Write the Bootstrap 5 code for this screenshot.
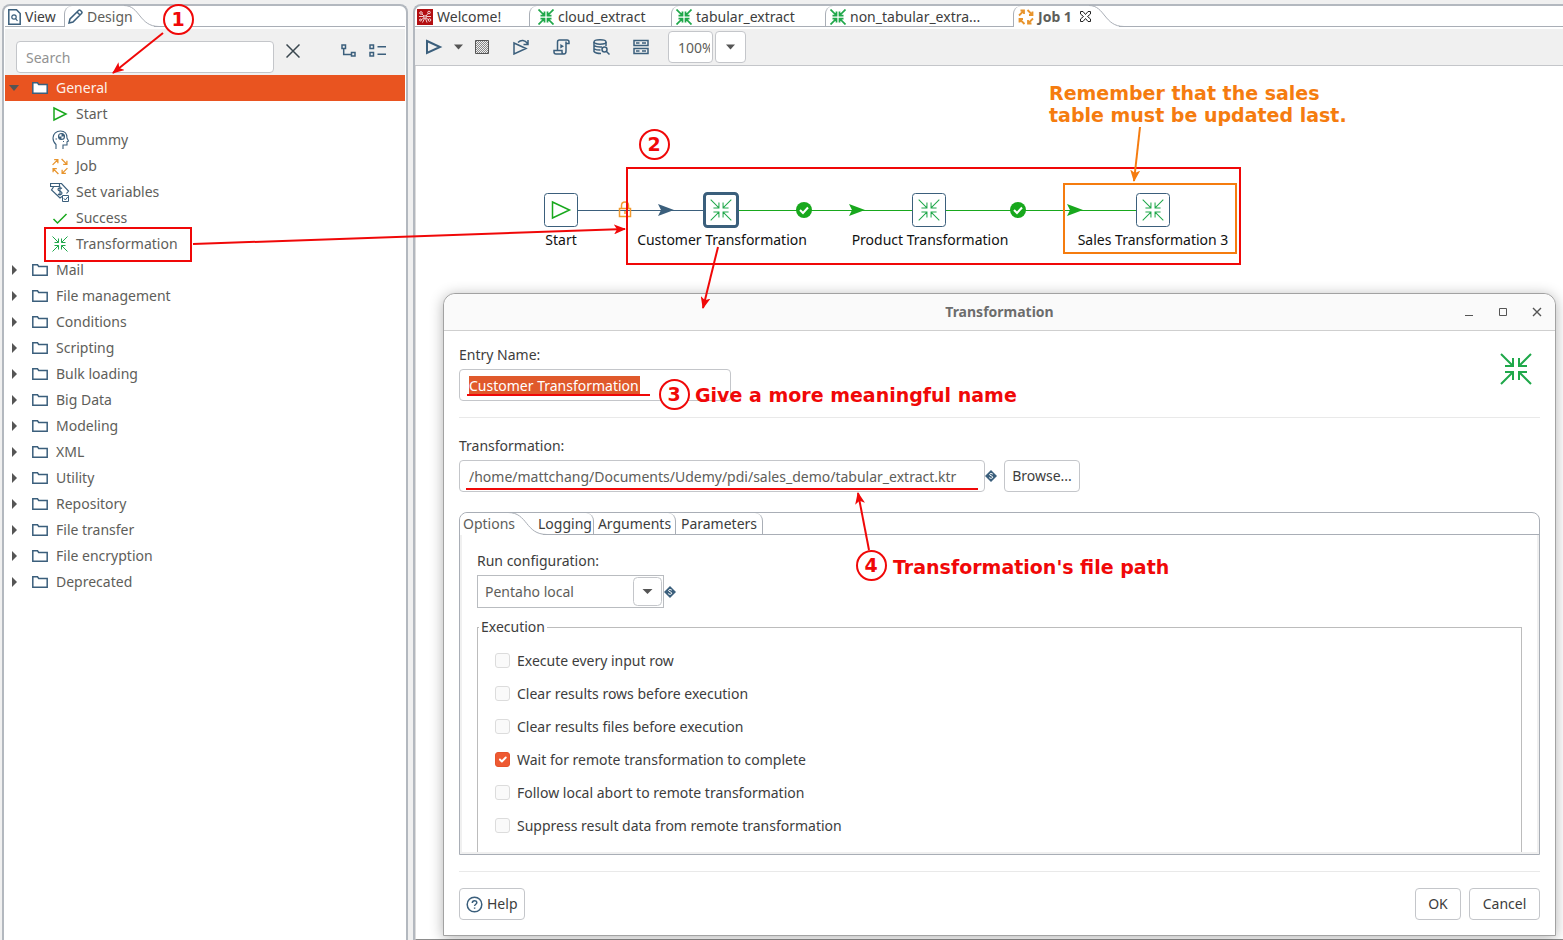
<!DOCTYPE html>
<html lang="en">
<head>
<meta charset="utf-8">
<meta name="viewport" content="width=device-width, initial-scale=1">
<title>Job 1</title>
<link href="https://cdn.jsdelivr.net/npm/bootstrap@5.3.0/dist/css/bootstrap.min.css" rel="stylesheet">
<style>
  :root { --steel:#3b5f7c; --line:#a9aeb6; --soft:#c4c6ca; --orange:#e95420; --green:#1fa84a; --ink:#3d3d3d; --muted-ink:#5e5e5a; }
  body { font-family:"Noto Sans","Open Sans",sans-serif; font-size:14px; line-height:20px; color:var(--ink); background:#f0f0f0; height:100vh; min-height:900px; }
  svg { display:block; flex:none; }
  button { color:inherit; }
  .ico { fill:none; stroke:var(--steel); stroke-width:1.5; }
  .ico-green { stroke:var(--green); }
  .ico-amber { stroke:#e8942c; }
  .arrow-fill { fill:#555; }
  .workbench { padding-top:4px; padding-left:2px; gap:5px; }
  .pane { background:#fff; border:2px solid #b3b8bf; border-bottom:0; border-radius:8px 8px 0 0; }
  .pane-side { width:406px; flex:none; padding:0 1px; }
  .pane-main { border-right:0; border-top-right-radius:0; min-width:0; min-height:0; }

  .tab-strip { height:21px; border-bottom:1px solid var(--line); margin-bottom:2px; flex:none; }
  .tab-strip > button { border:0; background:none; padding:0; height:21px; gap:4px; position:relative; white-space:nowrap; }
  .tab-strip > .edge { border-left:1px solid var(--line); border-top-left-radius:8px; padding-left:4px; }
  .tab-strip > .on { background:#fff; color:var(--muted-ink); }
  .tab-tail { position:absolute; left:100%; top:-2px; margin-left:-8px; fill:none; stroke:var(--line); }
  .tab-tail .cover { fill:#fff; stroke:none; }
  .tab-strip > .t-view { width:59px; padding-left:3px; }
  .tab-strip > .t-design { width:68px; padding-left:3px; }
  .tab-strip > .t-home { width:114px; padding-left:2px; }
  .t-cloud { width:142px; } .t-tab { width:154px; } .t-non { width:188px; } .t-job { width:84px; }

  .side-tools { background:#f0f0f0; height:46px; padding-left:11px; flex:none; }
  .side-tools .icon-btn { margin-top:15px; }
  .field { border:1px solid var(--soft); border-radius:4px; background:#fff; color:var(--muted-ink); height:32px; padding:0 9px; outline:0; }
  .field-search { width:258px; margin-top:12px; }
  .field-search::placeholder { color:#929292; }
  .icon-btn { border:0; background:none; padding:0; }
  .tree button { width:100%; height:26px; border:0; background:none; padding:0 0 0 7px; color:var(--muted-ink); display:flex; align-items:center; text-align:left; }
  .tree .folder { margin:0 8px 0 14px; }
  .tree .twisty { width:6px; fill:#555; }
  .tree .open-row { background:var(--orange); color:#fdf0e8; padding-left:4px; }
  .tree .open-row .twisty { width:10px; }
  .tree .open-row .folder { fill:#fff; margin-left:13px; }
  .tree .kid { padding-left:45px; gap:6px; }

  .tool-bar { background:#f0f0f0; height:37px; border-bottom:1px solid var(--soft); padding-left:10px; flex:none; }
  .tool-bar .icon-btn { margin-right:19px; }
  .tool-bar .icon-tight { margin-right:7px; }
  .field-zoom { width:45px; padding-right:2px; }
  .field-box { width:31px; margin-left:2px; padding:0; display:flex; align-items:center; justify-content:center; }
  .canvas { border-left:1px solid #dcdcdc; border-bottom:1px solid #8c8c8c; background:#fff; padding-bottom:3px; min-height:0; }

  .job-dialog { margin:0 7px 0 27px; border:1px solid #a2a2a2; border-radius:12px 12px 0 0; background:#fff; box-shadow:0 2px 14px rgba(0,0,0,.3); min-height:0; position:relative; }
  .dialog-head { height:37px; background:#fafafa; border-bottom:1px solid #cfcfcf; border-radius:12px 12px 0 0; }
  .dialog-head .caps { right:12px; gap:22px; }
  .dialog-body { padding:14px 15px 15px; min-height:0; }
  .rule { height:1px; background:#e9e9e9; flex:none; }
  .path-label { padding-top:18px; }
  .field-name { width:272px; color:#fff; background:linear-gradient(#e0592b,#e0592b) 9px 6px / 171px 18px no-repeat #fff; }
  .field-path { width:526px; }
  .push { background:#fff; border:1px solid var(--soft); border-radius:4px; height:32px; padding:0 6px; color:var(--ink); white-space:nowrap; }
  .push-ok { width:46px; } .push-cancel { width:71px; } .push-browse { width:76px; margin-left:7px; } .push-help { width:66px; }

  .notebook { border:1px solid var(--line); border-radius:8px 8px 0 0; margin-top:20px; min-height:0; }
  .notebook .tab-strip { margin:0; height:22px; }
  .notebook .tab-strip > button { padding:0 3px; border-right:1px solid var(--line); border-top-right-radius:8px; }
  .notebook .tab-strip > .on { border:0; width:72px; height:22px; text-align:left; border-radius:8px 0 0 0; }
  .notebook .tab-strip > .after { padding-left:6px; width:62px; text-align:right; }
  .t-arg { width:82px; } .t-par { width:87px; }
  .notebook .tab-tail { top:-1px; margin-left:-24px; }
  .sheet { padding:16px 15px 0; border:solid #f0f0f0; border-width:0 2px 2px; min-height:0; overflow:hidden; }
  .combo { width:187px; height:33px; appearance:none; border:1px solid #b9bcc0; border-radius:0; color:var(--muted-ink); padding:0 7px;
    background:#fff url("data:image/svg+xml,%3Csvg xmlns='http://www.w3.org/2000/svg' width='29' height='29'%3E%3Crect x='.5' y='.5' width='28' height='28' rx='4' fill='%23fff' stroke='%23c4c6ca'/%3E%3Cpath d='M9.500 12h10l-5 5z' fill='%23555'/%3E%3C/svg%3E") right 1px top 1px no-repeat; }
  .exec { border:1px solid #bcbcbc; padding:7px 0 0; height:260px; margin-top:9px; }
  .exec legend { float:none; width:auto; font-size:14px; line-height:20px; padding:0 2px; margin:0 0 0 1px; }
  .opt { height:33px; gap:7px; padding-left:17px; }
  .opt .form-check-input { width:15px; height:15px; margin:0; border:1px solid #dcdcdc; background-color:#fafafa; border-radius:3px; }
  .opt .form-check-input:checked { background-color:#ee5a32; border-color:#e5532c; }

  .notes { position:absolute; left:0; top:0; pointer-events:none; z-index:5; font-family:"DejaVu Sans",sans-serif; font-weight:700; font-size:19px; }
  .hops text { font-size:14px; text-anchor:middle; fill:#111; }
</style>
</head>
<body class="position-relative overflow-hidden">

<svg width="0" height="0" class="position-absolute" aria-hidden="true">
  <symbol id="i-trans" viewBox="-1 -1 32 32"><path d="M0 0l12 12M4 12h8V4M30 0L18 12M26 12h-8V4M0 30l12-12M4 18h8v8M30 30L18 18M26 18h-8v8"/></symbol>
  <symbol id="i-job" viewBox="0 0 16 16"><path d="M1 6.500L6 1.500M2.500 1.500H6V5M9.500 1l5 5M14.500 2.500V6H11M6.500 15l-5-5M1.500 13.500V10H5M15 9.500l-5 5M10 11v3.500h3.500"/></symbol>
  <symbol id="i-folder" viewBox="0 0 16 12"><path d="M.8 11.200V.8h4.700l1.200 1.700h8.500v8.700z"/></symbol>
  <symbol id="i-var" viewBox="0 0 12 12"><path d="M6 0l6 6-6 6-6-6z" fill="#3b5f7c" stroke="none"/><path d="M7.800 4.200C7 3.200 4.600 3.300 4.600 4.600S7.700 5.700 7.700 7.200 5 8.600 4.200 7.600" fill="none" stroke="#fff" stroke-width="1"/></symbol>
  <symbol id="i-right" viewBox="0 0 6 10"><path d="M0 0l5 5-5 5z"/></symbol>
</svg>

<div class="workbench d-flex h-100">

  <aside class="pane pane-side d-flex flex-column">
    <div class="tab-strip d-flex">
      <button class="t-view d-flex align-items-center">
        <svg width="13" height="16" viewBox="0 0 13 16" class="ico"><path d="M.8.8h7.700l3.700 3.700v10.700H.8z"/><circle cx="6" cy="8" r="2.200" stroke-width="1.200"/><path d="M7.600 9.600L9.500 12" stroke-width="1.200"/></svg>
        View</button>
      <button class="edge on t-design d-flex align-items-center">
        <svg width="15" height="15" viewBox="0 0 15 15" class="ico"><path d="M1 14l1-4 8.500-8.500q1-1 2 0l1 1q1 1 0 2L5 13zM9 3l3 3"/></svg>
        Design
        <svg class="tab-tail" width="36" height="23" viewBox="0 0 36 23"><path class="cover" d="M8 20C18 20 20 22 30 22V23H8z"/><path d="M0 1.500C16 1.500 15 22.500 35 22.500"/></svg></button>
    </div>
    <div class="side-tools d-flex align-items-start">
      <input class="field field-search" type="search" placeholder="Search" aria-label="Search">
      <button class="icon-btn ms-2 ps-1" aria-label="Clear"><svg width="14" height="14" viewBox="0 0 14 14" fill="none" stroke="#3a474f" stroke-width="1.500"><path d="M.5.5l13 13M13.500.5l-13 13"/></svg></button>
      <button class="icon-btn ms-4 ps-3" aria-label="Expand all"><svg width="17" height="14" viewBox="0 0 17 14" class="ico"><path d="M2 1h3.500v3.500H2zM11.500 8.500H15V12h-3.500zM3.700 4.500v6h7.800"/></svg></button>
      <button class="icon-btn ms-2 ps-1" aria-label="Collapse all"><svg width="18" height="14" viewBox="0 0 18 14" class="ico"><path d="M1 1h3.500v3.500H1zM1 8.500h3.500V12H1zM8.500 2.700H17M8.500 10.300H17"/></svg></button>
    </div>
    <ul class="tree list-unstyled m-0">
      <li><button class="open-row"><svg class="twisty" height="6" viewBox="0 0 10 6"><path d="M0 0h10L5 6z"/></svg><svg class="ico folder" width="16" height="12"><use href="#i-folder"/></svg>General</button>
        <ul class="list-unstyled m-0">
          <li><button class="kid"><svg class="ico" width="20" height="16" viewBox="0 0 20 16" style="stroke:#18a81d"><path d="M4 2l12 6-12 6z"/></svg>Start</button></li>
          <li><button class="kid"><svg class="ico" width="20" height="20" viewBox="0 0 20 20"><path d="M6 19v-4.500q-3-2.500-3-6.500C3 3.500 6.500 1 10.500 1c4.500 0 6.500 3 6.500 7l1.500 3-1.500.8V15h-4v4" stroke-width="1.100"/><circle cx="11.500" cy="6.500" r="3" stroke-width="1.100"/><path d="M11.500 3.500a3 3 0 0 1 3 3h-3zM11.500 9.500a3 3 0 0 1-3-3h3z" fill="#3b5f7c" stroke="none"/><path d="M5.500 9h1.500M13 11.500h1" stroke-width="1.100"/></svg>Dummy</button></li>
          <li><button class="kid"><svg class="ico ico-amber" width="20" height="17" style="stroke-width:1.200"><use href="#i-job"/></svg>Job</button></li>
          <li><button class="kid"><svg class="ico" width="20" height="20" viewBox="0 0 20 20"><path d="M.5 1.500h9v3h-9zM9 1.500h2.500L18.500 9l-2 2.500M3.500 5L1.500 8l8.500 8 2-1.500" stroke-width="1.200"/><path d="M12 6.500C11 5.500 8 5.500 8 7.500s4 1.500 4 3.500-3 2-4 1M10 4.500v9" stroke-width="1.200"/><path d="M12.500 13.500h6v6h-6z" fill="#fff" stroke-width="1"/><path d="M13.800 16.300l1.500 1.700 2.400-3" stroke-width="1"/></svg>Set variables</button></li>
          <li><button class="kid"><svg class="ico" width="20" height="16" viewBox="0 0 20 16" style="stroke:#18a81d"><path d="M3.500 9l4 4 9-9"/></svg>Success</button></li>
          <li><button class="kid"><svg class="ico ico-green" width="20" height="16" style="stroke-width:2"><use href="#i-trans"/></svg>Transformation</button></li>
        </ul></li>
      <li><button><svg class="twisty" height="10"><use href="#i-right"/></svg><svg class="ico folder" width="16" height="12"><use href="#i-folder"/></svg>Mail</button></li>
      <li><button><svg class="twisty" height="10"><use href="#i-right"/></svg><svg class="ico folder" width="16" height="12"><use href="#i-folder"/></svg>File management</button></li>
      <li><button><svg class="twisty" height="10"><use href="#i-right"/></svg><svg class="ico folder" width="16" height="12"><use href="#i-folder"/></svg>Conditions</button></li>
      <li><button><svg class="twisty" height="10"><use href="#i-right"/></svg><svg class="ico folder" width="16" height="12"><use href="#i-folder"/></svg>Scripting</button></li>
      <li><button><svg class="twisty" height="10"><use href="#i-right"/></svg><svg class="ico folder" width="16" height="12"><use href="#i-folder"/></svg>Bulk loading</button></li>
      <li><button><svg class="twisty" height="10"><use href="#i-right"/></svg><svg class="ico folder" width="16" height="12"><use href="#i-folder"/></svg>Big Data</button></li>
      <li><button><svg class="twisty" height="10"><use href="#i-right"/></svg><svg class="ico folder" width="16" height="12"><use href="#i-folder"/></svg>Modeling</button></li>
      <li><button><svg class="twisty" height="10"><use href="#i-right"/></svg><svg class="ico folder" width="16" height="12"><use href="#i-folder"/></svg>XML</button></li>
      <li><button><svg class="twisty" height="10"><use href="#i-right"/></svg><svg class="ico folder" width="16" height="12"><use href="#i-folder"/></svg>Utility</button></li>
      <li><button><svg class="twisty" height="10"><use href="#i-right"/></svg><svg class="ico folder" width="16" height="12"><use href="#i-folder"/></svg>Repository</button></li>
      <li><button><svg class="twisty" height="10"><use href="#i-right"/></svg><svg class="ico folder" width="16" height="12"><use href="#i-folder"/></svg>File transfer</button></li>
      <li><button><svg class="twisty" height="10"><use href="#i-right"/></svg><svg class="ico folder" width="16" height="12"><use href="#i-folder"/></svg>File encryption</button></li>
      <li><button><svg class="twisty" height="10"><use href="#i-right"/></svg><svg class="ico folder" width="16" height="12"><use href="#i-folder"/></svg>Deprecated</button></li>
    </ul>
  </aside>

  <main class="pane pane-main flex-grow-1 d-flex flex-column">
    <div class="tab-strip d-flex">
      <button class="t-home d-flex align-items-center"><svg width="16" height="16" viewBox="0 0 16 16"><path d="M0 0h16v16H0z" fill="#b30f12"/><g fill="none" stroke="#fff" stroke-width=".8"><circle cx="4" cy="4" r="1.300"/><circle cx="12" cy="3.500" r="1.300"/><circle cx="8" cy="8" r="1.300"/><circle cx="3.500" cy="11" r="1"/><circle cx="12.500" cy="11" r="1.300"/><path d="M5 5l2 2M11 4.500L9 7M7 9l-2.500 1.500M9 9l2.500 1.500M7.500 9.500l-2 4M8.500 9.500l1.500 4M2 7.500h4.500M9.500 7.500H14"/></g></svg>Welcome!</button>
      <button class="edge t-cloud d-flex align-items-center"><svg class="ico ico-green ms-1" width="16" height="16" style="stroke-width:3.500"><use href="#i-trans"/></svg>cloud_extract</button>
      <button class="edge t-tab d-flex align-items-center"><svg class="ico ico-green" width="16" height="16" style="stroke-width:3.500"><use href="#i-trans"/></svg>tabular_extract</button>
      <button class="edge t-non d-flex align-items-center"><svg class="ico ico-green" width="16" height="16" style="stroke-width:3.500"><use href="#i-trans"/></svg>non_tabular_extra...</button>
      <button class="edge on t-job d-flex align-items-center fw-bold"><svg class="ico ico-amber" width="16" height="16" style="stroke-width:1.800"><use href="#i-job"/></svg>Job 1
        <svg class="ms-1" width="11" height="11" viewBox="0 0 11 11" fill="#fff" stroke="#222"><path d="M.5.5h2.500l2.500 3 2.500-3h2.500v2.500l-3 2.500 3 2.500v2.500H8l-2.500-3-2.500 3H.5V8l3-2.500-3-2.500z"/></svg>
        <svg class="tab-tail" width="36" height="23" viewBox="0 0 36 23"><path class="cover" d="M8 20C18 20 20 22 30 22V23H8z"/><path d="M0 1.500C16 1.500 15 22.500 35 22.500"/></svg></button>
    </div>
    <div class="tool-bar d-flex align-items-center">
      <button class="icon-btn icon-tight" aria-label="Run"><svg class="ico" width="18" height="16" viewBox="0 0 18 16" style="stroke-width:2"><path d="M2 2l13 6-13 6z"/></svg></button>
      <button class="icon-btn icon-tight ps-1" aria-label="Run options"><svg class="arrow-fill" width="10" height="6" viewBox="0 0 10 6"><path d="M0 .5h9L4.500 5.500z"/></svg></button>
      <button class="icon-btn ps-1" aria-label="Stop"><svg width="14" height="14" viewBox="0 0 14 14"><defs><pattern id="dots" width="2" height="2" patternUnits="userSpaceOnUse"><path d="M0 0h1v1H0zM1 1h1v1H1z" fill="#888"/></pattern></defs><path d="M.5.5h13v13H.5z" fill="url(#dots)" stroke="#555"/></svg></button>
      <button class="icon-btn ps-1" aria-label="Replay"><svg class="ico" width="18" height="16" viewBox="0 0 18 16"><path d="M2 4v11l12-5.500zM6 3.500C9 .5 13 1 15.500 4.500M16 1v4.500h-4.500"/></svg></button>
      <button class="icon-btn ps-1" aria-label="Script"><svg class="ico" width="17" height="16" viewBox="0 0 17 16"><path d="M4.500 11V3q0-2 2-2h7.500q2 0 2 2v1.500h-3M13 2.500V12q0 3-2 3H3q-2 0-2-2v-1.500h8v1.500q0 2 2 2"/><path d="M7.300 5v4.500l3.700-2.300z" fill="#3b5f7c" stroke="none"/></svg></button>
      <button class="icon-btn ps-1" aria-label="Explore database"><svg class="ico" width="17" height="16" viewBox="0 0 17 16"><ellipse cx="7" cy="3" rx="6" ry="2.200"/><path d="M1 3v9.500q1.500 2 7 2M13 3v4M1 6.500q3 2 8 1.500M1 9.800q3 1.500 6.500 1.300"/><circle cx="11.500" cy="10.500" r="2.500"/><path d="M13.500 12.500l3 3"/></svg></button>
      <button class="icon-btn ps-1" aria-label="Results"><svg class="ico" width="16" height="16" viewBox="0 0 16 16"><path d="M1 1.500h14v5H1zM1 9.500h14v5H1zM3 4h3.500M9 4h4M3 12h3.500M9 12h4"/></svg></button>
      <input class="field field-zoom" value="100%" aria-label="Zoom">
      <button class="field field-box" aria-label="Zoom levels"><svg class="arrow-fill" width="10" height="6" viewBox="0 0 10 6"><path d="M0 .5h9L4.500 5.500z"/></svg></button>
    </div>

    <div class="canvas flex-grow-1 d-flex flex-column">
      <svg class="hops" width="860" height="227" viewBox="416 66 860 227">
        <path d="M577 210.500h126" stroke="#3b5f7c" /><path d="M739 210.500h173M946 210.500h190" stroke="#18a81d"/>
        <path d="M658 204l16 6-16 6 3-6z" fill="#3b5f7c"/><path d="M849 204l16 6-16 6 3-6zM1067 204l16 6-16 6 3-6z" fill="#18a81d"/>
        <g fill="none" stroke="#f29a2e" stroke-width="1.500"><path d="M619.500 208.500h11v8h-11zM621.500 208v-2.500q0-3.500 3.500-3.500t3.500 3.500v2.500M625 211v3"/></g>
        <g fill="#18a81d"><circle cx="804" cy="210" r="8"/><circle cx="1018" cy="210" r="8"/></g>
        <path d="M800 210l3 3 5-5.500M1014 210l3 3 5-5.500" fill="none" stroke="#fff" stroke-width="2"/>
        <g fill="#fff" stroke="#3b5f7c"><rect x="544.500" y="193.500" width="33" height="33" rx="3"/><rect x="704.500" y="193.500" width="33" height="33" rx="3" stroke-width="3"/><rect x="912.500" y="193.500" width="33" height="33" rx="3"/><rect x="1136.500" y="193.500" width="33" height="33" rx="3"/></g>
        <path d="M552.500 202l17 8-17 8z" fill="none" stroke="#18a81d" stroke-width="1.500"/>
        <g class="ico ico-green"><use href="#i-trans" x="710" y="199" width="22" height="22"/><use href="#i-trans" x="918" y="199" width="22" height="22"/><use href="#i-trans" x="1142" y="199" width="22" height="22"/></g>
        <text x="561" y="245">Start</text><text x="722" y="245">Customer Transformation</text><text x="930" y="245">Product Transformation</text><text x="1153" y="245">Sales Transformation 3</text>
      </svg>

      <section class="job-dialog flex-grow-1 d-flex flex-column" aria-label="Transformation">
        <header class="dialog-head position-relative d-flex align-items-center justify-content-center flex-shrink-0">
          <strong class="opacity-75">Transformation</strong>
          <div class="caps position-absolute d-flex align-items-center">
            <button class="icon-btn" aria-label="Minimize"><svg width="12" height="12" viewBox="0 0 12 12" stroke="#555"><path d="M2 9.500h8"/></svg></button>
            <button class="icon-btn" aria-label="Maximize"><svg width="12" height="12" viewBox="0 0 12 12" stroke="#555" fill="none"><path d="M2.500 2.500h7v7h-7z"/></svg></button>
            <button class="icon-btn" aria-label="Close"><svg width="12" height="12" viewBox="0 0 12 12" stroke="#555" stroke-width="1.400"><path d="M2 2l8 8M10 2l-8 8"/></svg></button>
          </div>
        </header>
        <div class="dialog-body flex-grow-1 d-flex flex-column">
          <div class="d-flex justify-content-between">
            <div>
              <label class="d-block mb-1" for="entry">Entry Name:</label>
              <input id="entry" class="field field-name" value="Customer Transformation">
            </div>
            <svg class="ico ico-green mt-2 me-2" width="32" height="32" style="stroke-width:2"><use href="#i-trans"/></svg>
          </div>
          <div class="rule mt-3"></div>
          <label class="path-label mb-1" for="path">Transformation:</label>
          <div class="d-flex align-items-center">
            <input id="path" class="field field-path" value="/home/mattchang/Documents/Udemy/pdi/sales_demo/tabular_extract.ktr">
            <svg width="12" height="12"><use href="#i-var"/></svg>
            <button class="push push-browse">Browse...</button>
          </div>

          <div class="notebook flex-grow-1 d-flex flex-column">
            <div class="tab-strip d-flex">
              <button class="on">Options<svg class="tab-tail" width="40" height="23" viewBox="0 0 40 23"><path class="cover" d="M24 19C28 21 30 22 35 22V23H24z"/><path d="M0 .5C20 .5 17 22.500 39 22.500"/></svg></button>
              <button class="after">Logging</button>
              <button class="t-arg">Arguments</button>
              <button class="t-par">Parameters</button>
            </div>
            <div class="sheet flex-grow-1">
              <label class="d-block" for="runcfg">Run configuration:</label>
              <div class="d-flex align-items-center pt-1">
                <select id="runcfg" class="combo"><option>Pentaho local</option></select>
                <svg width="12" height="12"><use href="#i-var"/></svg>
              </div>
              <fieldset class="exec">
                <legend>Execution</legend>
                <div class="opt d-flex align-items-center"><input class="form-check-input" type="checkbox" id="o1"><label for="o1">Execute every input row</label></div>
                <div class="opt d-flex align-items-center"><input class="form-check-input" type="checkbox" id="o2"><label for="o2">Clear results rows before execution</label></div>
                <div class="opt d-flex align-items-center"><input class="form-check-input" type="checkbox" id="o3"><label for="o3">Clear results files before execution</label></div>
                <div class="opt d-flex align-items-center"><input class="form-check-input" type="checkbox" id="o4" checked><label for="o4">Wait for remote transformation to complete</label></div>
                <div class="opt d-flex align-items-center"><input class="form-check-input" type="checkbox" id="o5"><label for="o5">Follow local abort to remote transformation</label></div>
                <div class="opt d-flex align-items-center"><input class="form-check-input" type="checkbox" id="o6"><label for="o6">Suppress result data from remote transformation</label></div>
              </fieldset>
            </div>
          </div>
          <div class="rule my-3"></div>
          <footer class="d-flex gap-2">
            <button class="push push-help d-flex align-items-center gap-1 me-auto"><svg class="ico" width="17" height="17" viewBox="0 0 17 17"><circle cx="8.500" cy="8.500" r="7.300"/><path d="M6.300 7c0-3 4.500-3 4.500-.3 0 1.500-2.200 1.600-2.200 3.300M8.600 11.500v1.300"/></svg>Help</button>
            <button class="push push-ok">OK</button>
            <button class="push push-cancel">Cancel</button>
          </footer>
        </div>
      </section>
    </div>
  </main>
</div>

<svg class="notes" width="1360" height="620" viewBox="0 0 1360 620">
  <defs>
    <marker id="red-tip" viewBox="0 0 12 10" refX="11" refY="5" markerWidth="12" markerHeight="10" markerUnits="userSpaceOnUse" orient="auto"><path d="M0 0l12 5-12 5 3-5z" fill="#f00808"/></marker>
    <marker id="orange-tip" viewBox="0 0 12 10" refX="11" refY="5" markerWidth="12" markerHeight="10" markerUnits="userSpaceOnUse" orient="auto"><path d="M0 0l12 5-12 5 3-5z" fill="#f57c0f"/></marker>
  </defs>
  <g fill="none" stroke="#f00808" stroke-width="2">
    <circle cx="178.500" cy="19.500" r="14.500" fill="#fff"/><circle cx="654.500" cy="144.500" r="14.500"/><circle cx="674.500" cy="394.500" r="14.500" fill="#fff"/><circle cx="871.500" cy="565.500" r="14.500" fill="#fff"/>
    <path d="M45 228h146v33H45zM627 168h613v96H627zM467 395h183M466 489h512"/>
    <g marker-end="url(#red-tip)"><path d="M163 33L113 73"/><path d="M193 244l432-15"/><path d="M718 247l-15 61"/><path d="M869 550l-11-57"/></g>
  </g>
  <g fill="none" stroke="#f57c0f" stroke-width="2"><path d="M1064 184h172v69h-172z"/><path d="M1140 127l-6 54" marker-end="url(#orange-tip)"/></g>
  <g fill="#f00808">
    <g text-anchor="middle"><text x="178" y="26">1</text><text x="654" y="151">2</text><text x="674" y="401">3</text><text x="871" y="572">4</text></g>
    <text x="695" y="402">Give a more meaningful name</text><text x="893" y="574">Transformation's file path</text>
  </g>
  <g fill="#f57c0f"><text x="1049" y="100">Remember that the sales</text><text x="1049" y="122">table must be updated last.</text></g>
</svg>

<script src="https://cdn.jsdelivr.net/npm/bootstrap@5.3.0/dist/js/bootstrap.bundle.min.js"></script>
</body>
</html>
